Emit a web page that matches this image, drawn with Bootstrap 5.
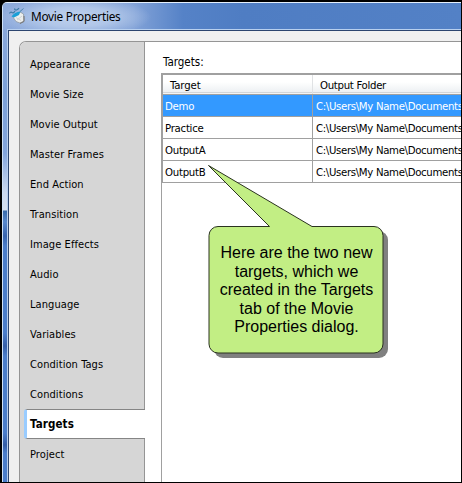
<!DOCTYPE html>
<html lang="en">
<head>
<meta charset="utf-8">
<title>Movie Properties</title>
<link href="https://cdn.jsdelivr.net/npm/bootstrap@5.3.0/dist/css/bootstrap.min.css" rel="stylesheet">
<style>
body{width:462px;height:483px;overflow:hidden;background:#000;font:11.5px "DejaVu Sans Condensed","Noto Sans",sans-serif;color:#000}
.dialog-frame{width:462px;height:483px;padding:2px 1px 1px 2px}
.chrome{min-width:0;border-top:1px solid #e4effc;border-left:1px solid #cfe2f8;border-top-left-radius:5px;padding-left:4px;background:linear-gradient(#8fabdc 0,#7ba0d8 90px,#83a5dc 150px,#cbd9ef 190px,#d5e0f0 207px,#386bac 208px,#5888cc 219px,#3864ae 233px,#4a7dcb 243px,#4a7dcb 330px,#365fa8 343px,#4a7dcb 353px,#4a7dcb 430px,#345da6 442px,#4a7dcb 450px)}
.title-strip{height:26px;margin-left:-4px;padding-left:6px;border-top-left-radius:4px;background:radial-gradient(ellipse 76px 20px at 72px 14px,#bfd1ed 0,#b0c6e8 50%,transparent 100%),linear-gradient(90deg,#8eabdc 0,#83a3d8 130px,#5582c7 180px,#4f7dc3 240px,#5381c6 100%)}
.title-label{font:11.8px "Noto Sans",sans-serif;letter-spacing:-.26px;margin-left:6px;line-height:26px;white-space:nowrap}
.client{min-width:0;background:#f0f0f0;border-top:1px solid #b8d0ef;border-left:1px solid #b5ccec}
.client-in{min-width:0;border-top:1px solid #2c456f;border-left:1px solid #2c456f;padding:10px 0 0 10px}
.pages{min-width:0;border:1px solid #959595;border-right:0;border-bottom:0;border-top-left-radius:7px;background:#fff;overflow:hidden}
.side{width:125px;background:#d6d6d6;border-right:1px solid #959595;padding-top:7px;font-size:11px;letter-spacing:.08px}
.side .page-link-item{height:30px;line-height:31px;padding-left:10px;white-space:nowrap}
.side .page-link-item.active{margin:0 -1px 0 4px;padding-left:3px;background:#fff;border:1px solid #858585;border-right:0;border-left:3px solid #99ccff;border-radius:3px 0 0 3px;line-height:29px;font-weight:700;font-size:11.5px;letter-spacing:.1px}
.main{min-width:0;padding:12px 0 0 16px}
.main-label{height:19px;line-height:17px;padding-left:2px}
.grid-box{border-left:1px solid #a0a0a0;border-top:2px solid #a0a0a0}
.grid-inner{border-left:1px solid #a0a0a0}
.target-row{height:22px;border-bottom:1px solid #a0a0a0;line-height:23px;white-space:nowrap;font-size:11.3px;letter-spacing:-.26px}
.target-row>div:first-child{width:150px;padding-left:2px;border-right:1px solid #a0a0a0}
.target-row>div:first-child{height:21px}
.target-row>div:last-child{padding-left:3px;letter-spacing:-.33px}
.target-row.head{height:20px;line-height:21px;background:linear-gradient(#fff 7px,#edf0f3 17px,#d2d5d8 17px,#d2d5d8 18px,#f4f4f4 18px);letter-spacing:-.1px}
.target-row.head>div:first-child{height:19px;padding-left:7px;border-color:#e0e2e4}
.target-row.head>div:last-child{padding-left:7px;letter-spacing:-.3px}
.target-row.chosen{background:#3399ff;color:#fff}
.callout{left:205px;top:160px;width:184px;height:200px}
.callout-text{left:209px;top:244px;width:175px;font:16px/18.6px "Liberation Sans",Arial,sans-serif;white-space:nowrap}
</style>
<script src="https://cdn.jsdelivr.net/npm/bootstrap@5.3.0/dist/js/bootstrap.bundle.min.js"></script>
</head>
<body class="position-relative m-0">
<div class="dialog-frame d-flex flex-column">
 <div class="chrome d-flex flex-column flex-grow-1">
  <header class="title-strip d-flex align-items-center flex-shrink-0">
   <svg width="16" height="18" viewBox="0 0 16 18">
    <path d="M.5 6.500q1-2 2.500-1t3-1.500M5.500 1.500q.5 2 2 1.500t2.500-2" stroke="#3d7ba6" stroke-width="1.200" fill="none"/>
    <path d="M11 4.500l3.500-3" fill="none" stroke="#4d86ac"/>
    <path d="M4 10q2-4 7-5l3.500 2 .5 7-4 2-4-1.500z" fill="#eceeed" stroke="#8a9299" stroke-width=".7"/>
    <path d="M2.500 9.500q3-4.500 9-5l-1.500 3.500-5 2.500z" fill="#1a9fd6"/>
    <path d="M7 10.500l5 3M8 13l5-4" stroke="#c9cccd" stroke-width=".8"/>
    <path d="M15 9v5.500l-4 2" fill="none" stroke="#77736f"/>
   </svg>
   <span class="title-label">Movie Properties</span>
  </header>
  <div class="client d-flex flex-grow-1">
   <div class="client-in d-flex flex-grow-1">
    <div class="pages d-flex flex-grow-1">
     <nav class="side flex-shrink-0">
      <div class="page-link-item">Appearance</div>
      <div class="page-link-item">Movie Size</div>
      <div class="page-link-item">Movie Output</div>
      <div class="page-link-item">Master Frames</div>
      <div class="page-link-item">End Action</div>
      <div class="page-link-item">Transition</div>
      <div class="page-link-item">Image Effects</div>
      <div class="page-link-item">Audio</div>
      <div class="page-link-item">Language</div>
      <div class="page-link-item">Variables</div>
      <div class="page-link-item">Condition Tags</div>
      <div class="page-link-item">Conditions</div>
      <div class="page-link-item active">Targets</div>
      <div class="page-link-item">Project</div>
     </nav>
     <main class="main d-flex flex-column flex-grow-1">
      <div class="main-label">Targets:</div>
      <div class="grid-box flex-grow-1 overflow-hidden">
       <div class="grid-inner">
        <div class="target-row head d-flex"><div class="flex-shrink-0">Target</div><div>Output Folder</div></div>
        <div class="target-row chosen d-flex"><div class="flex-shrink-0">Demo</div><div>C:\Users\My Name\Documents</div></div>
        <div class="target-row d-flex"><div class="flex-shrink-0">Practice</div><div>C:\Users\My Name\Documents</div></div>
        <div class="target-row d-flex"><div class="flex-shrink-0">OutputA</div><div>C:\Users\My Name\Documents</div></div>
        <div class="target-row d-flex"><div class="flex-shrink-0">OutputB</div><div>C:\Users\My Name\Documents</div></div>
       </div>
      </div>
     </main>
    </div>
   </div>
  </div>
 </div>
</div>
<svg class="callout position-absolute" viewBox="205 160 184 200">
 <rect x="214" y="231" width="174" height="127" rx="9" fill="#808080"/>
 <path d="M208.500 165.500L269.500 226.500H218a9 9 0 0 0-9 9V344a9 9 0 0 0 9 9H374a9 9 0 0 0 9-9V235.500a9 9 0 0 0-9-9H312z" fill="#c2ee84" stroke="#2a331f"/>
</svg>
<div class="callout-text position-absolute text-center">Here are the two new<br>targets, which we<br>created in the Targets<br>tab of the Movie<br>Properties dialog.</div>
</body>
</html>
